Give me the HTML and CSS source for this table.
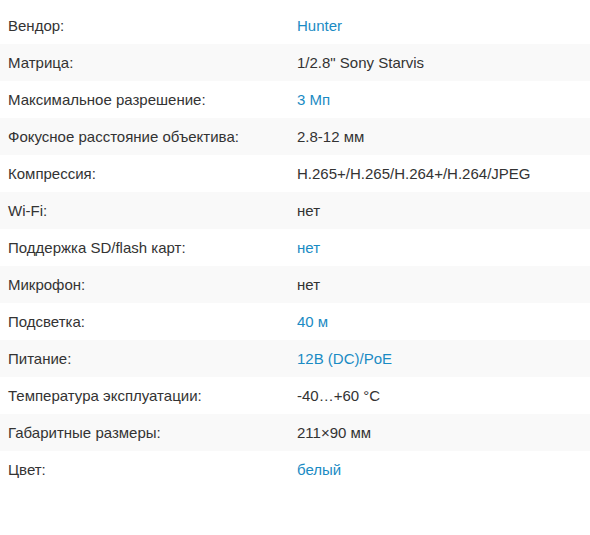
FILE: index.html
```html
<!DOCTYPE html>
<html lang="ru">
<head>
<meta charset="utf-8">
<link rel="stylesheet" href="styles.css">
</head>
<body>
<div class="specs">
  <div class="row"><div class="k">Вендор:</div><div class="v link">Hunter</div></div>
  <div class="row"><div class="k">Матрица:</div><div class="v">1/2.8" Sony Starvis</div></div>
  <div class="row"><div class="k">Максимальное разрешение:</div><div class="v link">3 Мп</div></div>
  <div class="row"><div class="k">Фокусное расстояние объектива:</div><div class="v">2.8-12 мм</div></div>
  <div class="row"><div class="k">Компрессия:</div><div class="v">H.265+/H.265/H.264+/H.264/JPEG</div></div>
  <div class="row"><div class="k">Wi-Fi:</div><div class="v">нет</div></div>
  <div class="row"><div class="k">Поддержка SD/flash карт:</div><div class="v link">нет</div></div>
  <div class="row"><div class="k">Микрофон:</div><div class="v">нет</div></div>
  <div class="row"><div class="k">Подсветка:</div><div class="v link">40 м</div></div>
  <div class="row"><div class="k">Питание:</div><div class="v link">12В (DC)/PoE</div></div>
  <div class="row"><div class="k">Температура эксплуатации:</div><div class="v">-40…+60 °C</div></div>
  <div class="row"><div class="k">Габаритные размеры:</div><div class="v">211×90 мм</div></div>
  <div class="row"><div class="k">Цвет:</div><div class="v link">белый</div></div>
</div>
</body>
</html>
```
FILE: styles.css
```css
html, body {
  margin: 0;
  padding: 0;
  background: #fff;
}
body {
  font-family: "Liberation Sans", Arial, sans-serif;
  font-size: 15px;
  color: #333;
}
.specs {
  padding-top: 7px;
}
.row {
  display: grid;
  grid-template-columns: 289px 1fr;
  height: 37px;
  align-items: center;
  padding: 0 8px;
}
.row:nth-child(even) {
  background: #f9f9f9;
}
.link {
  color: #1a8bc4;
}
```
